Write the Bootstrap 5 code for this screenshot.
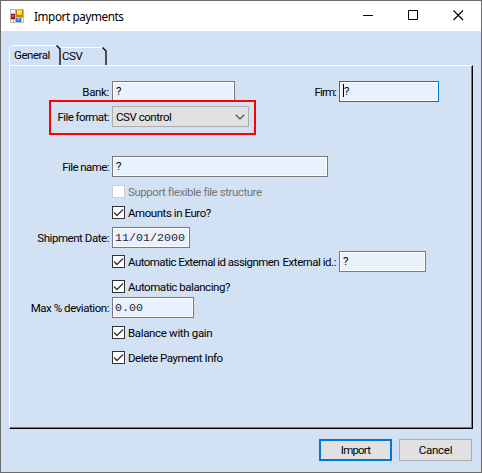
<!DOCTYPE html>
<html lang="en">
<head>
<meta charset="utf-8">
<meta name="viewport" content="width=device-width, initial-scale=1">
<title>Import payments</title>
<link href="https://cdn.jsdelivr.net/npm/bootstrap@5.3.0/dist/css/bootstrap.min.css" rel="stylesheet">
<style>
body{margin:0;overflow:hidden;color:#000;font:11.5px/14px Roboto,"Liberation Sans",sans-serif;letter-spacing:-.45px;background:#d2e1f4}
.window{width:482px;height:473px;border:1px solid #6b6b6b;background:#d2e1f4}
.titlebar{height:30px;padding-left:9px;background:#fff}
.caption{font:11.7px/16px "Noto Sans","Open Sans",sans-serif;margin-left:9px;letter-spacing:-.4px}
.winbtn{width:46px;height:30px;border:0;background:none;padding:0}
.tabs{height:34px;padding-left:8px}
.tab-face{position:relative;white-space:nowrap}
.tab-face svg{display:block}
.tab-face span{position:absolute}
.sheet{margin-left:8px;width:464px;height:364px;border:1px solid #fff;border-right-color:#000;border-bottom-color:#000;box-shadow:inset -1px -1px #7a7a72;padding-top:15px;position:relative}
.line{height:21px;white-space:nowrap}
.line.short{height:13px}
.cap{width:99px;text-align:right;margin-right:3px;flex:none}
.cap2{text-align:right;margin-right:3px;flex:none}
.field{height:21px;border:1px solid #7a7a7a;box-shadow:inset 0 0 0 1px #fff;background:#e9f1fc;padding:2px 3px 0;line-height:14px;border-radius:0;flex:none}
.field.active{border-color:#0078d7}
.mono{font-family:"Liberation Mono",monospace;font-size:11.7px;letter-spacing:0;padding-left:2px;padding-top:3px;color:#2a2440}
.combo{width:137px;height:21px;background:#e1e1e1;border:1px solid #adadad;padding:0 3px;flex:none}
.box{width:13px;height:13px;background:#fff;border:1px solid #333;margin-left:102px;margin-right:3px;flex:none}
.box svg{display:block}
.box.off{border-color:#ccc}
.frame{position:absolute;left:39px;top:34px;width:207px;height:35px;border:2px solid #f00}
.push{width:73px;height:22px;border:1px solid #adadad;background:#e1e1e1;padding:0;font-size:11.5px;line-height:18px;color:#000;letter-spacing:-.25px}
.push.main{border:2px solid #0078d7;letter-spacing:-.8px}
.caret-bar{width:1px;height:13px;background:#000}
.narrow{letter-spacing:-.56px}.narrower{letter-spacing:-.9px}.wide{letter-spacing:-.34px}
.g1{margin-top:4px}.g2{margin-top:29px}.g3{margin-top:8px}.g4{margin-top:3px}.g5{margin-top:12px}
</style>
<script src="https://cdn.jsdelivr.net/npm/bootstrap@5.3.0/dist/js/bootstrap.bundle.min.js"></script>
</head>
<body>
<div class="window">
  <header class="titlebar d-flex align-items-center">
    <svg width="15" height="15" viewBox="0 0 15 15" shape-rendering="crispEdges">
      <path fill="#b9b9b9" d="M0 0h14v14H0z"/><path fill="#fff" d="M1 1h4v3H1zM1 11h2v2H1zM4 11h1v2H4zM12 9h1v4h-1z"/>
      <path fill="#9c1a14" d="M1 5h4v5H1z"/><path fill="#e8645a" d="M2 6h2v2H2z"/>
      <path fill="#b98500" d="M6 1h7v7H6z"/><path fill="#ffd23c" d="M7 1h5v5H7z"/><path fill="#ffea94" d="M7 2h3v2H7z"/>
      <path fill="#3c78d2" d="M6 9h5v4H6z"/><path fill="#74aaf4" d="M7 9h3v2H7z"/>
    </svg>
    <span class="caption">Import payments</span>
    <div class="d-flex ms-auto">
      <button class="winbtn" aria-label="Minimize"><svg width="46" height="30" class="d-block"><path stroke="#000" d="M20 14.500h10"/></svg></button>
      <button class="winbtn" aria-label="Maximize"><svg width="46" height="30" class="d-block"><path stroke="#000" fill="none" d="M19.500 9.500h9v9h-9z"/></svg></button>
      <button class="winbtn" aria-label="Close"><svg width="46" height="30" class="d-block"><path stroke="#000" stroke-width="1.100" d="M18.500 9.500l9.500 9.500M28 9.500l-9.500 9.500"/></svg></button>
    </div>
  </header>
  <nav class="tabs d-flex align-items-end">
    <div class="tab-face"><svg width="52" height="20"><path fill="none" stroke="#fff" d="M.5 20V3.500l3-3H47"/><path fill="none" stroke="#000" stroke-width="1.300" d="M47.500 .5l3.500 3.500V20"/></svg><span style="left:5px;top:3px">General</span></div>
    <div class="tab-face"><svg width="48" height="18"><path fill="none" stroke="#fff" d="M0 .5h41"/><path fill="none" stroke="#000" stroke-width="1.300" d="M41.500 .5l3.500 3.500V18"/></svg><span style="left:1px;top:2px">CSV</span></div>
  </nav>
  <main class="sheet">
    <div class="line d-flex align-items-center"><span class="cap wide">Bank:</span><div class="field" style="width:123px">?</div><span class="cap2 narrower" style="width:101px">Firm:</span><div class="field active d-flex" style="width:100px;padding-left:3px"><i class="caret-bar"></i>?</div></div>
    <div class="line d-flex align-items-center g1"><span class="cap narrow">File format:</span><div class="combo d-flex align-items-center justify-content-between"><span>CSV control</span><svg width="10" height="6"><path fill="none" stroke="#444" stroke-width="1.200" d="M.7 .7L5 5 9.300 .7"/></svg></div></div>
    <div class="line d-flex align-items-center g2"><span class="cap narrow">File name:</span><div class="field" style="width:216px">?</div></div>
    <div class="line short d-flex align-items-center g3" style="color:#777"><i class="box off"></i><span>Support flexible file structure</span></div>
    <div class="line short d-flex align-items-center g3"><i class="box"><svg width="11" height="11"><path fill="none" stroke="#333" stroke-width="1.300" d="M1 5.500l3 3L10 2.500"/></svg></i><span>Amounts in Euro?</span></div>
    <div class="line d-flex align-items-center g3"><span class="cap">Shipment Date:</span><div class="field mono" style="width:78px">11/01/2000</div></div>
    <div class="line d-flex align-items-center g4"><i class="box"><svg width="11" height="11"><path fill="none" stroke="#333" stroke-width="1.300" d="M1 5.500l3 3L10 2.500"/></svg></i><span class="narrow">Automatic External id assignmen</span><span class="cap2 ms-auto">External id.:</span><div class="field" style="width:87px;margin-right:46px">?</div></div>
    <div class="line short d-flex align-items-center g3"><i class="box"><svg width="11" height="11"><path fill="none" stroke="#333" stroke-width="1.300" d="M1 5.500l3 3L10 2.500"/></svg></i><span>Automatic balancing?</span></div>
    <div class="line d-flex align-items-center g1"><span class="cap">Max % deviation:</span><div class="field mono" style="width:82px">0.00</div></div>
    <div class="line short d-flex align-items-center g3"><i class="box"><svg width="11" height="11"><path fill="none" stroke="#333" stroke-width="1.300" d="M1 5.500l3 3L10 2.500"/></svg></i><span class="wide">Balance with gain</span></div>
    <div class="line short d-flex align-items-center g5"><i class="box"><svg width="11" height="11"><path fill="none" stroke="#333" stroke-width="1.300" d="M1 5.500l3 3L10 2.500"/></svg></i><span>Delete Payment Info</span></div>
    <div class="frame"></div>
  </main>
  <footer class="d-flex justify-content-end" style="padding:10px 9px 0;gap:7px">
    <button class="push main">Import</button><button class="push">Cancel</button>
  </footer>
</div>
</body>
</html>
